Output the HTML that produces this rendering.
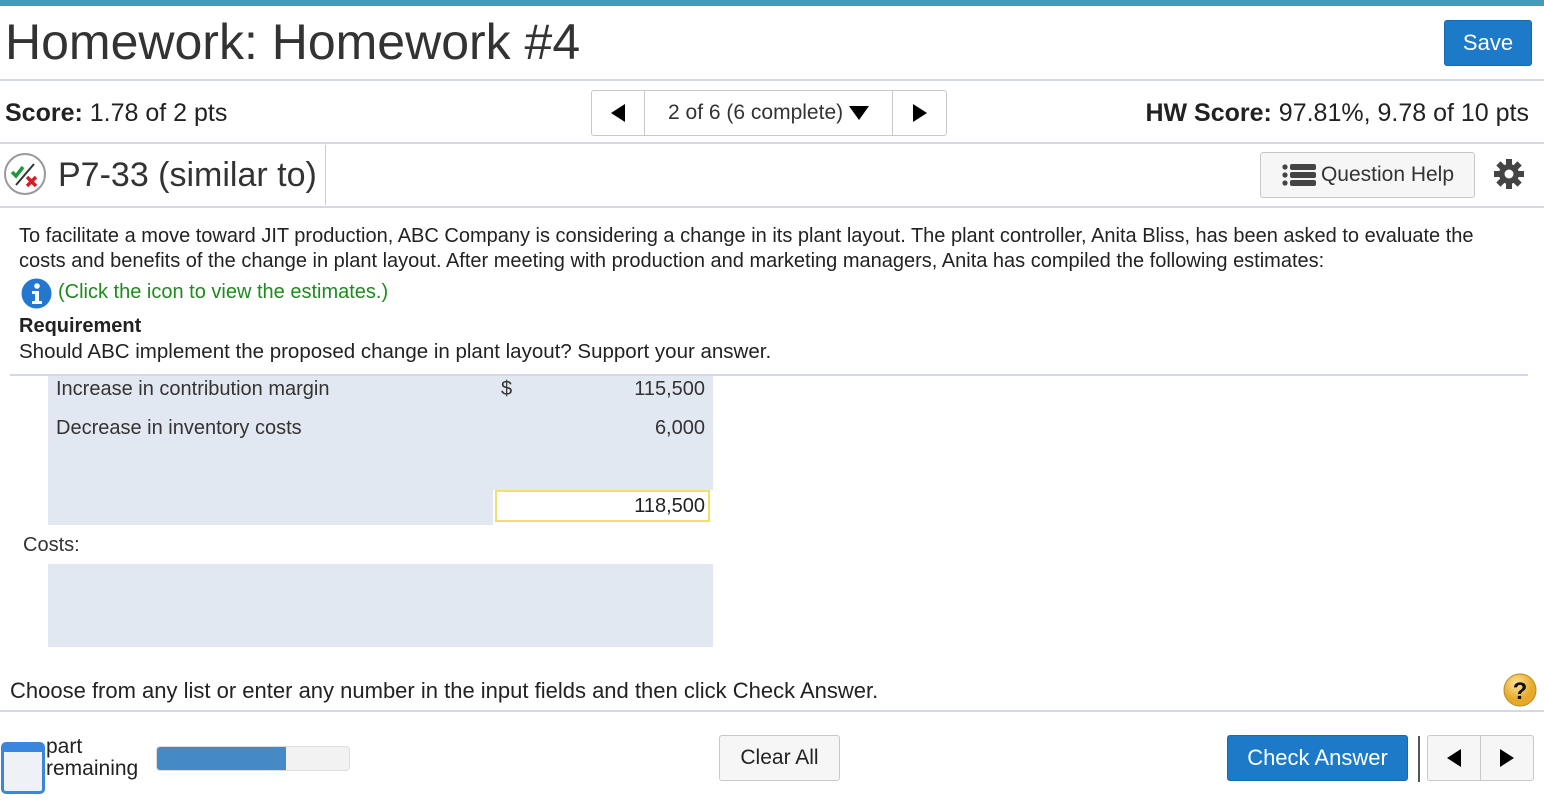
<!DOCTYPE html>
<html><head><meta charset="utf-8"><style>
*{margin:0;padding:0;box-sizing:border-box}
body{width:1544px;height:804px;position:relative;background:#fff;font-family:"Liberation Sans",Arial,sans-serif;color:#222;overflow:hidden}
.a{position:absolute;white-space:nowrap}
.hl{position:absolute;left:0;width:1544px;height:2px;background:#d3d9e3}
.btn{position:absolute;border:1px solid #c8c8c8;border-radius:3px;background:#f6f6f6;display:flex;align-items:center;justify-content:center;font-size:21px;color:#222}
.blue{background:#1c7ac8;border-color:#176ab0;color:#fff}
</style></head><body>
<div class="a" style="left:0;top:0;width:1544px;height:6px;background:#4699bd"></div>
<div class="a" style="left:5px;top:13px;font-size:50px;color:#333">Homework: Homework #4</div>
<div class="btn blue" style="left:1444px;top:20px;width:88px;height:46px;font-size:22px">Save</div>
<div class="hl" style="top:79px"></div>
<div class="a" style="left:5px;top:99px;font-size:25px"><b>Score:</b> 1.78 of 2 pts</div>
<div class="btn" style="left:591px;top:90px;width:356px;height:46px;background:#fff;justify-content:flex-start">
 <div style="width:53px;height:44px;border-right:1px solid #c8c8c8;display:flex;align-items:center;justify-content:center"><svg width="14" height="18"><path d="M14 0L0 9L14 18Z" fill="#000"/></svg></div>
 <div style="width:248px;height:44px;border-right:1px solid #c8c8c8;display:flex;align-items:center;justify-content:center;font-size:21px;color:#333">2 of 6 (6 complete)&nbsp;<svg width="20" height="14"><path d="M0 0H20L10 14Z" fill="#000"/></svg></div>
 <div style="width:53px;height:44px;display:flex;align-items:center;justify-content:center"><svg width="14" height="18"><path d="M0 0L14 9L0 18Z" fill="#000"/></svg></div>
</div>
<div class="a" style="right:15px;top:99px;font-size:25px"><b>HW Score:</b> 97.81%, 9.78 of 10 pts</div>
<div class="hl" style="top:142px"></div>
<svg class="a" style="left:3px;top:152px" width="44" height="44"><circle cx="22" cy="22" r="20" fill="#fff" stroke="#999" stroke-width="2"/><path d="M9 20l4 4 7-9" stroke="#1a9a3a" stroke-width="3.5" fill="none"/><path d="M13 33L31 12" stroke="#333" stroke-width="2"/><path d="M24 25l9 9M33 25l-9 9" stroke="#d0202a" stroke-width="3.5"/></svg>
<div class="a" style="left:58px;top:156px;font-size:34px;color:#333">P7-33 (similar to)</div>
<div class="a" style="left:325px;top:145px;width:1px;height:60px;background:#ccc"></div>
<div class="btn" style="left:1260px;top:152px;width:215px;height:46px;font-size:21px;color:#333"><svg width="36" height="26" style="margin-right:4px"><g fill="#444"><circle cx="4" cy="5" r="2.6"/><circle cx="4" cy="13" r="2.6"/><circle cx="4" cy="21" r="2.6"/><rect x="9" y="2" width="26" height="6" rx="2"/><rect x="9" y="10" width="26" height="6" rx="2"/><rect x="9" y="18" width="26" height="6" rx="2"/></g></svg>Question Help</div>
<svg class="a" style="left:1493px;top:158px" width="32" height="32" viewBox="0 0 32 32"><g fill="#444"><circle cx="16" cy="16" r="10"/><rect x="13" y="1" width="6" height="30"/><rect x="13" y="1" width="6" height="30" transform="rotate(45 16 16)"/><rect x="13" y="1" width="6" height="30" transform="rotate(90 16 16)"/><rect x="13" y="1" width="6" height="30" transform="rotate(135 16 16)"/></g><circle cx="16" cy="16" r="4.5" fill="#fff"/></svg>
<div class="hl" style="top:206px"></div>
<div class="a" style="left:19px;top:224px;font-size:20px;line-height:25px;white-space:normal;width:1485px">To facilitate a move toward JIT production, ABC Company is considering a change in its plant layout. The plant controller, Anita Bliss, has been asked to evaluate the costs and benefits of the change in plant layout. After meeting with production and marketing managers, Anita has compiled the following estimates:</div>
<svg class="a" style="left:21px;top:278px" width="31" height="31"><circle cx="15.5" cy="15.5" r="15" fill="#2377d0"/><circle cx="16" cy="8" r="2.8" fill="#fff"/><path d="M11 13h7v10h3v3h-10v-3h3v-7h-3z" fill="#fff"/></svg>
<div class="a" style="left:58px;top:281px;font-size:20px;color:#1e8a1e">(Click the icon to view the estimates.)</div>
<div class="a" style="left:19px;top:315px;font-size:20px;font-weight:bold">Requirement</div>
<div class="a" style="left:19px;top:340px;font-size:20.5px">Should ABC implement the proposed change in plant layout? Support your answer.</div>
<div class="a" style="left:10px;top:374px;width:1518px;height:2px;background:#d3d9e3"></div>
<div class="a" style="left:48px;top:376px;width:665px;height:110px;background:#e2e8f2"></div>
<div class="a" style="left:48px;top:486px;width:445px;height:39px;background:#e2e8f2"></div>
<div class="a" style="left:493px;top:486px;width:220px;height:4px;background:#e2e8f2"></div>
<div class="a" style="left:56px;top:378px;font-size:20px;color:#333">Increase in contribution margin</div>
<div class="a" style="left:501px;top:378px;font-size:20px;color:#333">$</div>
<div class="a" style="right:839px;top:378px;font-size:20px;color:#333">115,500</div>
<div class="a" style="left:56px;top:417px;font-size:20px;color:#333">Decrease in inventory costs</div>
<div class="a" style="right:839px;top:417px;font-size:20px;color:#333">6,000</div>
<div class="a" style="left:495px;top:490px;width:215px;height:32px;border:2px solid #f4dd6a;background:#fff;text-align:right;padding-right:3px;font-size:20px;line-height:28px">118,500</div>
<div class="a" style="left:23px;top:534px;font-size:20px;color:#333">Costs:</div>
<div class="a" style="left:48px;top:564px;width:665px;height:83px;background:#e2e8f2"></div>
<div class="a" style="left:10px;top:678px;font-size:22px;color:#222">Choose from any list or enter any number in the input fields and then click Check Answer.</div>
<svg class="a" style="left:1503px;top:673px" width="34" height="34"><defs><radialGradient id="g" cx="40%" cy="30%"><stop offset="0" stop-color="#fde39a"/><stop offset="1" stop-color="#e6a92a"/></radialGradient></defs><circle cx="17" cy="17" r="16" fill="url(#g)" stroke="#b88a20"/><text x="17" y="26" text-anchor="middle" font-family="Liberation Sans" font-weight="bold" font-size="24" fill="#111">?</text></svg>
<div class="hl" style="top:710px"></div>
<div class="a" style="left:1px;top:742px;width:44px;height:52px;border:3px solid #3a86de;border-radius:5px;background:#eef2f7;border-top-width:10px"></div>
<div class="a" style="left:46px;top:736px;font-size:21px;line-height:22px;color:#222">part<br>remaining</div>
<div class="a" style="left:156px;top:746px;width:194px;height:25px;border:1px solid #ddd;border-radius:4px;background:#f2f2f2;overflow:hidden"><div style="width:129px;height:100%;background:#4589c6"></div></div>
<div class="btn" style="left:719px;top:735px;width:121px;height:46px">Clear All</div>
<div class="btn blue" style="left:1227px;top:735px;width:181px;height:46px;font-size:22px">Check Answer</div>
<div class="a" style="left:1418px;top:736px;width:2px;height:46px;background:#555"></div>
<div class="btn" style="left:1427px;top:735px;width:107px;height:46px;justify-content:flex-start">
 <div style="width:53px;height:44px;border-right:1px solid #c8c8c8;display:flex;align-items:center;justify-content:center"><svg width="14" height="18"><path d="M14 0L0 9L14 18Z" fill="#000"/></svg></div>
 <div style="width:52px;height:44px;display:flex;align-items:center;justify-content:center"><svg width="14" height="18"><path d="M0 0L14 9L0 18Z" fill="#000"/></svg></div>
</div>
</body></html>
